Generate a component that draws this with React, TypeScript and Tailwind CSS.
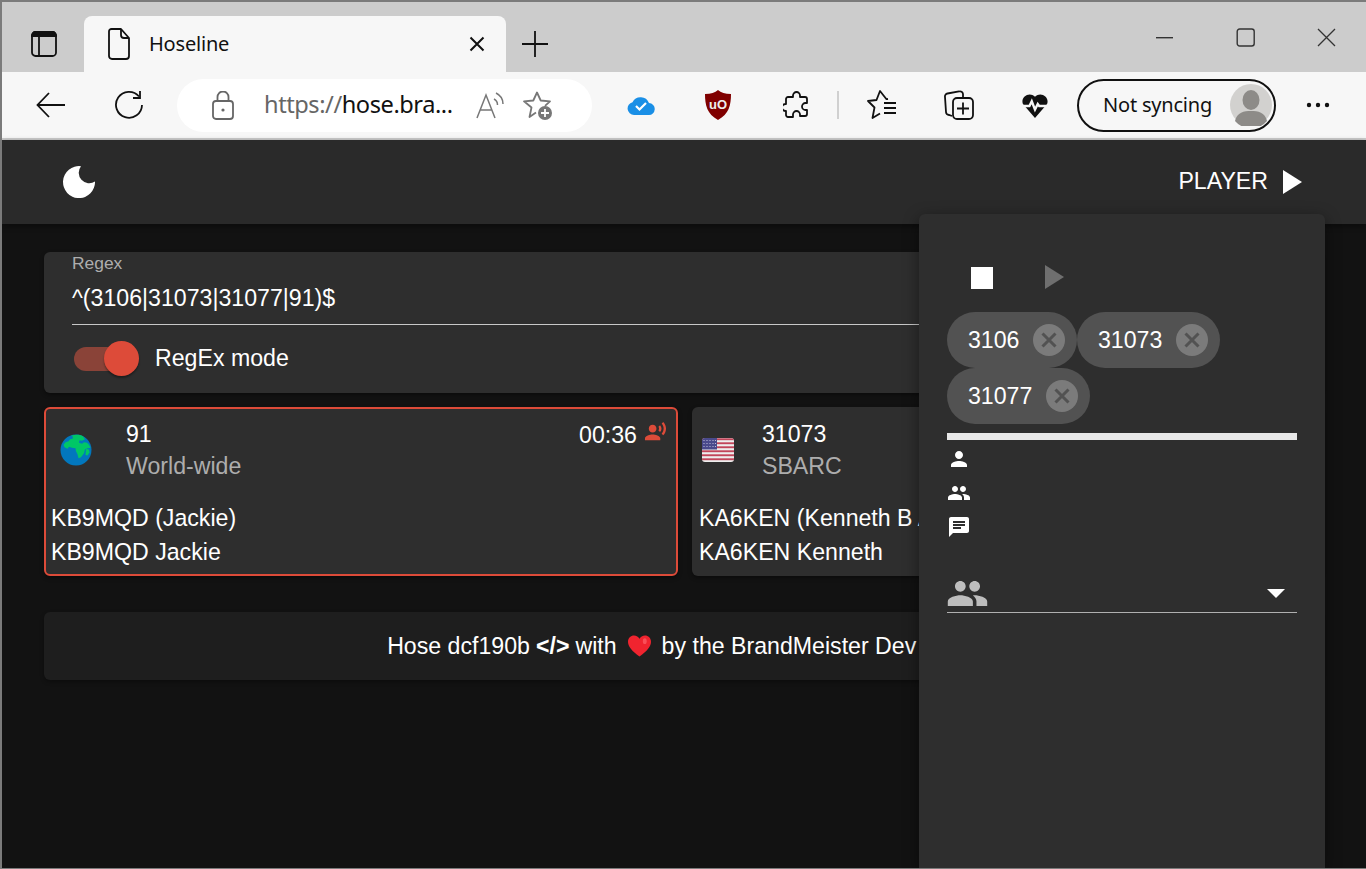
import React from "react";

const P = {
  person: "M12 12c2.21 0 4-1.79 4-4s-1.79-4-4-4-4 1.79-4 4 1.79 4 4 4zm0 2c-2.67 0-8 1.34-8 4v2h16v-2c0-2.66-5.33-4-8-4z",
  group: "M16 11c1.66 0 2.99-1.34 2.99-3S17.66 5 16 5c-1.66 0-3 1.34-3 3s1.34 3 3 3zm-8 0c1.66 0 2.99-1.34 2.99-3S9.66 5 8 5C6.34 5 5 6.34 5 8s1.34 3 3 3zm0 2c-2.33 0-7 1.17-7 3.5V19h14v-2.5c0-2.33-4.67-3.5-7-3.5zm8 0c-.29 0-.62.02-.97.05 1.16.84 1.97 1.97 1.97 3.45V19h6v-2.5c0-2.33-4.67-3.5-7-3.5z",
  chat: "M20 2H4c-1.1 0-1.99.9-1.99 2L2 22l4-4h14c1.1 0 2-.9 2-2V4c0-1.1-.9-2-2-2zM6 9h12v2H6V9zm8 5H6v-2h8v2zm4-6H6V6h12v2z",
  voice: "M9 13c2.21 0 4-1.79 4-4s-1.79-4-4-4-4 1.79-4 4 1.79 4 4 4zm0 2c-2.67 0-8 1.34-8 4v2h16v-2c0-2.66-5.33-4-8-4zm7.76-9.64l-1.68 1.69c.84 1.18.84 2.71 0 3.89l1.68 1.69c2.02-2.02 2.02-5.07 0-7.27zM20.07 2l-1.63 1.63c2.77 3.02 2.77 7.56 0 10.74L20.07 16c3.9-3.89 3.91-9.95 0-14z",
};

function Mat({ d, size, className }: { d: string; size: number; className?: string }) {
  return (
    <svg width={size} height={size} viewBox="0 0 24 24" fill="currentColor" className={className}>
      <path d={d} />
    </svg>
  );
}

function Chip({ label, width }: { label: string; width: string }) {
  return (
    <div className={`flex h-[56px] items-center justify-between rounded-full bg-[#525252] pl-[21px] pr-[12px] ${width}`}>
      <span>{label}</span>
      <span className="flex h-[32px] w-[32px] items-center justify-center rounded-full bg-[#7b7b7b]">
        <svg width="18" height="18" viewBox="0 0 18 18" stroke="#525252" strokeWidth="3">
          <path d="M2.5 2.5L15.5 15.5M15.5 2.5L2.5 15.5" />
        </svg>
      </span>
    </div>
  );
}

function Globe() {
  return (
    <svg width="32" height="32" viewBox="0 0 32 32">
      <circle cx="16" cy="16" r="15.5" fill="#0277bd" />
      <path
        d="M12 1.5c3-1 8-1 11 .8l2 3-3 1.5-2.5-.5-.5 2.5 3 1 2-1.5 3 .5 2 2 1.5 3-3 .5-2.5 1-1 4-3 4-2.5 1-1-4-1.5-3-.5-3-3.5-.5-3-1-1.5 2-3-1.5-1-2.5 2-2.5 3-1 1.5-2 2.5-.5.5-2-2-1z"
        fill="#00c766"
      />
      <path d="M26 15l3 .5.5 3-2 3-2-.5z" fill="#00c766" />
    </svg>
  );
}

function Flag() {
  return (
    <svg width="32" height="24" viewBox="0 0 32 24" className="rounded-[3px]">
      <rect width="32" height="24" fill="#eeeeee" />
      {[0, 4, 8, 12, 16, 20].map((y) => (
        <rect key={y} y={y + 0.3} width="32" height="1.9" fill="#c2455a" />
      ))}
      <rect width="15" height="11.5" fill="#4a4a8c" />
      {[2, 5, 8].map((y) =>
        [2, 5, 8, 11, 13.5].map((x) => <circle key={`${x}-${y}`} cx={x} cy={y + 0.5} r="0.6" fill="#cfcfe6" />)
      )}
    </svg>
  );
}

function Card({
  icon,
  id,
  name,
  l1,
  l2,
  active,
  slot,
}: {
  icon: React.ReactNode;
  id: string;
  name: string;
  l1: string;
  l2: string;
  active?: boolean;
  slot: string;
}) {
  return (
    <div
      className={`h-[169px] overflow-hidden whitespace-nowrap rounded-[6px] bg-[#2e2e2e] shadow-[0_2px_4px_rgba(0,0,0,0.4)] ${
        active ? "border-2 border-[#dd4b39]" : "border-2 border-transparent"
      }`}
    >
      <div className="flex h-[92px] items-start pr-[9px]">
        <div className={`flex h-[82px] items-center ${slot}`}>{icon}</div>
        <div className="flex-1 pt-[9px] leading-[32px]">
          <div>{id}</div>
          <div className="text-[#adadad]">{name}</div>
        </div>
        {active && (
          <div className="flex pt-[10px] leading-[32px]">
            <span>00:36</span>
            <Mat d={P.voice} size={23} className="ml-[7px] mt-[1px] text-[#dd4b39]" />
          </div>
        )}
      </div>
      <div className="pl-[5px] leading-[34px]">
        <div>{l1}</div>
        <div>{l2}</div>
      </div>
    </div>
  );
}

export default function App() {
  return (
    <div className="relative flex h-[869px] w-[1366px] flex-col overflow-hidden border-b border-l-2 border-t-2 border-b-[#7b7b7b] border-l-[#7b7b7b] border-t-[#7b7b7b] bg-[#121212] font-['Liberation_Sans',Arial,sans-serif] text-[23.15px] text-white">
      {/* Tab strip */}
      <div className="flex h-[70px] shrink-0 items-end bg-[#cccccc] font-['Noto_Sans',sans-serif] text-[#111]">
        <div className="flex h-[56px] w-[82px] items-center pl-[29px] pb-[1px]">
          <svg width="26" height="26" viewBox="0 0 26 26" fill="none" stroke="#111" strokeWidth="1.8">
            <rect x="1" y="1" width="24" height="24" rx="3.5" />
            <path d="M1 5h24V4.5a3.5 3.5 0 0 0-3.5-3.5h-17A3.5 3.5 0 0 0 1 4.5z" fill="#111" />
            <path d="M8 6v19" />
          </svg>
        </div>
        <div className="flex h-[56px] w-[422px] items-center rounded-t-[8px] bg-[#f7f7f7] pl-[24px] pr-[21px]">
          <svg width="22" height="32" viewBox="0 0 22 32" fill="none" stroke="#111" strokeWidth="1.8" strokeLinejoin="round">
            <path d="M3.5 1H13l8 9v18a3 3 0 0 1-3 3H4a3 3 0 0 1-3-3V3.5A2.5 2.5 0 0 1 3.5 1z" />
            <path d="M13 1v6a3 3 0 0 0 3 3h5" />
          </svg>
          <span className="ml-[19px] flex-1 text-[20px] tracking-[-0.2px]">Hoseline</span>
          <svg width="16" height="16" viewBox="0 0 16 16" stroke="#111" strokeWidth="2">
            <path d="M1.5 1.5l13 13M14.5 1.5l-13 13" />
          </svg>
        </div>
        <div className="flex h-[56px] flex-1 items-start">
          <svg width="26" height="26" viewBox="0 0 26 26" stroke="#111" strokeWidth="1.8" className="ml-[16px] mt-[15px]">
            <path d="M13 0v26M0 13h26" />
          </svg>
          <svg width="18" height="2" viewBox="0 0 18 2" className="ml-[608px] mt-[21px]">
            <rect width="17" height="1.4" fill="#333" />
          </svg>
          <svg width="20" height="20" viewBox="0 0 20 20" fill="none" stroke="#333" strokeWidth="1.4" className="ml-[62px] mt-[12px]">
            <rect x="1.2" y="1" width="17" height="17" rx="2.5" />
          </svg>
          <svg width="20" height="20" viewBox="0 0 20 20" stroke="#333" strokeWidth="1.3" className="ml-[61px] mt-[12px]">
            <path d="M1 1l17 17M18 1L1 18" />
          </svg>
        </div>
      </div>

      {/* Toolbar */}
      <div className="flex h-[68px] shrink-0 items-center border-b-2 border-[#cccccc] bg-[#f7f7f7] font-['Noto_Sans',sans-serif] text-[#111]">
        <svg width="30" height="26" viewBox="0 0 30 26" fill="none" stroke="#111" strokeWidth="1.8" className="ml-[34px]">
          <path d="M29 13H2M13 1L1.5 13 13 25" />
        </svg>
        <svg width="30" height="30" viewBox="0 0 30 30" fill="none" stroke="#111" strokeWidth="1.8" className="ml-[48px]">
          <path d="M25 6.5A13 13 0 1 0 28 15" />
          <path d="M26 1v7h-7" />
        </svg>
        <div className="ml-[33px] flex h-[53px] w-[415px] shrink-0 items-center rounded-full bg-white pl-[35px]">
          <svg width="22" height="29" viewBox="0 0 22 29" fill="none" stroke="#666" strokeWidth="1.8">
            <rect x="1" y="10" width="20" height="18" rx="3" />
            <path d="M5.5 10V6a5.5 5.5 0 0 1 11 0v4" />
            <circle cx="11" cy="19" r="1.6" fill="#666" stroke="none" />
          </svg>
          <span className="ml-[30px] w-[190px] whitespace-nowrap text-[23.6px] tracking-[-0.45px]">
            <span className="text-[#666]">https://</span>hose.bra...
          </span>
          <svg width="28" height="30" viewBox="0 0 28 30" fill="none" stroke="#777" strokeWidth="1.5" className="ml-[22px]">
            <path d="M1 28L10 5l9 23M4.5 20h11" />
            <path d="M18 9c2 1 3.5 3 3.5 6M20 3c4 2 7 6 7 11" />
          </svg>
          <svg width="32" height="32" viewBox="0 0 32 32" fill="none" stroke="#777" strokeWidth="1.8" className="ml-[18px]">
            <path d="M14 23.5L7.5 28l2-9.5L2 12.3l9.3-.8L15 3.5l3.7 8 9.300.8-5 4.500" strokeLinejoin="round" />
            <circle cx="23" cy="24" r="7" fill="#777" stroke="none" />
            <path d="M23 20v8M19 24h8" stroke="#fff" strokeWidth="1.8" />
          </svg>
        </div>
        <svg width="28" height="20" viewBox="0 0 28 20" className="ml-[35px]">
          <path d="M7 20a6.5 6.5 0 0 1-1.5-12.8A9 9 0 0 1 22 8a6 6 0 0 1-.5 12z" fill="#1a8fe6" />
          <path d="M9 11l3.5 3.5L19 8" fill="none" stroke="#fff" strokeWidth="2.2" />
        </svg>
        <svg width="26" height="30" viewBox="0 0 26 30" className="ml-[50px]">
          <path d="M13 0c3 2.5 7 4 13 4 0 11-2 20-13 26C2 24 0 15 0 4c6 0 10-1.500 13-4z" fill="#800000" />
          <text x="13" y="18.500" textAnchor="middle" fontSize="13" fontWeight="700" fill="#eee" fontFamily="Liberation Sans">uO</text>
        </svg>
        <svg width="26" height="30" viewBox="0 0 26 30" fill="none" stroke="#111" strokeWidth="1.8" strokeLinejoin="round" className="ml-[52px]">
          <path d="M10 5.500a3.500 3.500 0 0 1 7 0V7h5a2 2 0 0 1 2 2v4h-1.500a3.500 3.500 0 0 0 0 7H24v4a2 2 0 0 1-2 2h-5v-1.500a3.500 3.500 0 0 0-7 0V27H5a2 2 0 0 1-2-2v-4H2.500a3.500 3.500 0 0 1 0-7H3V9a2 2 0 0 1 2-2h5z" />
        </svg>
        <div className="ml-[28px] h-[28px] w-[2px] bg-[#d0d0d0]" />
        <svg width="30" height="30" viewBox="0 0 30 30" fill="none" stroke="#111" strokeWidth="1.8" strokeLinejoin="round" className="ml-[28px]">
          <path d="M21 9l-1.500.2L13 1l-3.500 9L1 11l6.500 6.500L5.500 28l7.500-4.500" />
          <path d="M17 13h12M17 18h12M17 23h12" />
        </svg>
        <svg width="30" height="30" viewBox="0 0 30 30" fill="none" stroke="#111" strokeWidth="1.8" className="ml-[47px]">
          <path d="M8 26L5 25a3 3 0 0 1-3-3L1 7a3 3 0 0 1 2.500-3.500L15 1.500A3 3 0 0 1 19 4v3" />
          <rect x="9" y="8" width="20" height="21" rx="4" />
          <path d="M19 12.500v12M13 18.500h12" />
        </svg>
        <svg width="26" height="28" viewBox="0 0 28 28" className="ml-[48px]">
          <path d="M14 28L1 13C-2 5 8-1 14 5c6-6 16 0 13 8z" fill="#111" />
          <path d="M0 15h8l2.500-5 3.500 9 3-6 1.500 2H28" fill="none" stroke="#f7f7f7" strokeWidth="2.600" />
        </svg>
        <div className="ml-[29px] flex h-[53px] w-[199px] items-center rounded-full border-2 border-[#111] pl-[24px] pr-[2px] text-[20px]">
          <span className="flex-1 whitespace-nowrap tracking-[-0.2px]">Not syncing</span>
          <svg width="42" height="42" viewBox="0 0 42 42">
            <circle cx="21" cy="21" r="21" fill="#d2d1cf" />
            <ellipse cx="21" cy="16" rx="8.500" ry="10" fill="#8d8b88" />
            <path d="M5 37c2-9 9-10 16-10s14 1 16 10a21 21 0 0 1-32 0z" fill="#8d8b88" />
          </svg>
        </div>
        <svg width="24" height="6" viewBox="0 0 24 6" fill="#111" className="ml-[30px]">
          <circle cx="3" cy="3" r="2.200" />
          <circle cx="12" cy="3" r="2.200" />
          <circle cx="21" cy="3" r="2.200" />
        </svg>
      </div>

      {/* App bar */}
      <div className="flex h-[84px] shrink-0 items-center justify-between bg-[#2a2a2a] pl-[61px] pr-[62px] shadow-[0_2px_6px_rgba(0,0,0,0.4)]">
        <svg width="32" height="32" viewBox="0 0 32 32" fill="#fff" className="-mt-[1px]">
          <path d="M18 .2A16 16 0 1 0 32 15.500 10.500 10.500 0 0 1 18 .2z" />
        </svg>
        <div className="flex items-center">
          <span className="-mt-[1px]">PLAYER</span>
          <svg width="19" height="24" viewBox="0 0 19 24" fill="#fff" className="ml-[15px] mr-[2px]">
            <path d="M0 0l19 12L0 24z" />
          </svg>
        </div>
      </div>

      {/* Main */}
      <div className="flex flex-1 flex-col pl-[42px] pr-[44px] pt-[28px]">
        <div className="h-[141px] rounded-[6px] bg-[#2e2e2e] px-[28px] shadow-[0_2px_4px_rgba(0,0,0,0.4)]">
          <div className="h-[73px] border-b border-[#c8c8c8]">
            <div className="text-[17.4px] leading-[22px] text-[#adadad]">Regex</div>
            <div className="mt-[9px] leading-[30px]">^(3106|31073|31077|91)$</div>
          </div>
          <div className="flex h-[67px] items-center pl-[2px]">
            <div className="relative h-[24px] w-[50px] rounded-full bg-[#8a4338]">
              <div className="absolute left-[30px] top-[-5.500px] h-[35px] w-[35px] rounded-full bg-[#dd4b39] shadow-[0_2px_2px_rgba(0,0,0,0.35)]" />
            </div>
            <span className="ml-[31px]">RegEx mode</span>
          </div>
        </div>
        <div className="mt-[14px] grid grid-cols-[634px_1fr] gap-[14px]">
          <Card icon={<Globe />} slot="w-[80px] pl-[14px]" id="91" name="World-wide" l1="KB9MQD (Jackie)" l2="KB9MQD Jackie" active />
          <Card icon={<Flag />} slot="w-[68px] pl-[8px]" id="31073" name="SBARC" l1="KA6KEN (Kenneth B Ashcraft)" l2="KA6KEN Kenneth" />
        </div>
        <div className="mt-[36px] flex h-[68px] items-center justify-center whitespace-nowrap rounded-[6px] bg-[#1e1e1e] shadow-[0_2px_4px_rgba(0,0,0,0.3)]">
          <span>Hose dcf190b</span>
          <span className="ml-[6px] font-bold">&lt;/&gt;</span>
          <span className="ml-[6px]">with</span>
          <svg width="23" height="22" viewBox="0 0 24 22" className="ml-[11px] mr-[11px]">
            <path d="M12 22C4 16 0 11.500 0 6.500 0 2.500 3 0 6.200 0 8.800 0 11 1.500 12 3.500 13 1.500 15.200 0 17.800 0 21 0 24 2.500 24 6.500 24 11.500 20 16 12 22z" fill="#f0242f" />
            <ellipse cx="17.500" cy="6" rx="2" ry="3" fill="#ff6d74" opacity=".6" />
          </svg>
          <span>by the BrandMeister Dev Team</span>
        </div>
      </div>

      {/* Player popover */}
      <div className="absolute bottom-0 left-[917px] top-[212px] w-[406px] rounded-t-[6px] bg-[#2e2e2e] px-[28px] pt-[52px] shadow-[0_4px_16px_rgba(0,0,0,0.45)]">
        <div className="flex h-[24px] items-center pl-[24px]">
          <div className="h-[22px] w-[22px] bg-white" />
          <svg width="19" height="24" viewBox="0 0 19 24" fill="#6f6f6f" className="-mt-[2px] ml-[52px]">
            <path d="M0 0l19 12L0 24z" />
          </svg>
        </div>
        <div className="mt-[22px] flex flex-wrap">
          <Chip label="3106" width="w-[130px]" />
          <Chip label="31073" width="w-[143px]" />
          <Chip label="31077" width="w-[143px]" />
        </div>
        <div className="mt-[9px] h-[7px] w-[350px] bg-[#e8e8e8]" />
        <div className="mt-[2px] flex flex-col">
          <div className="flex h-[34px] items-center"><Mat d={P.person} size={24} /></div>
          <div className="flex h-[34px] items-center"><Mat d={P.group} size={24} /></div>
          <div className="flex h-[34px] items-center"><Mat d={P.chat} size={24} /></div>
        </div>
        <div className="mt-[24px] flex h-[45px] w-[350px] items-center justify-between border-b border-[#b0b0b0] pr-[12px]">
          <Mat d={P.group} size={43} className="-ml-[1px] mt-[6px] text-[#bdbdbd]" />
          <svg width="18" height="9" viewBox="0 0 18 9" fill="#fff" className="mt-[6px]">
            <path d="M0 0h18L9 9z" />
          </svg>
        </div>
      </div>
    </div>
  );
}
